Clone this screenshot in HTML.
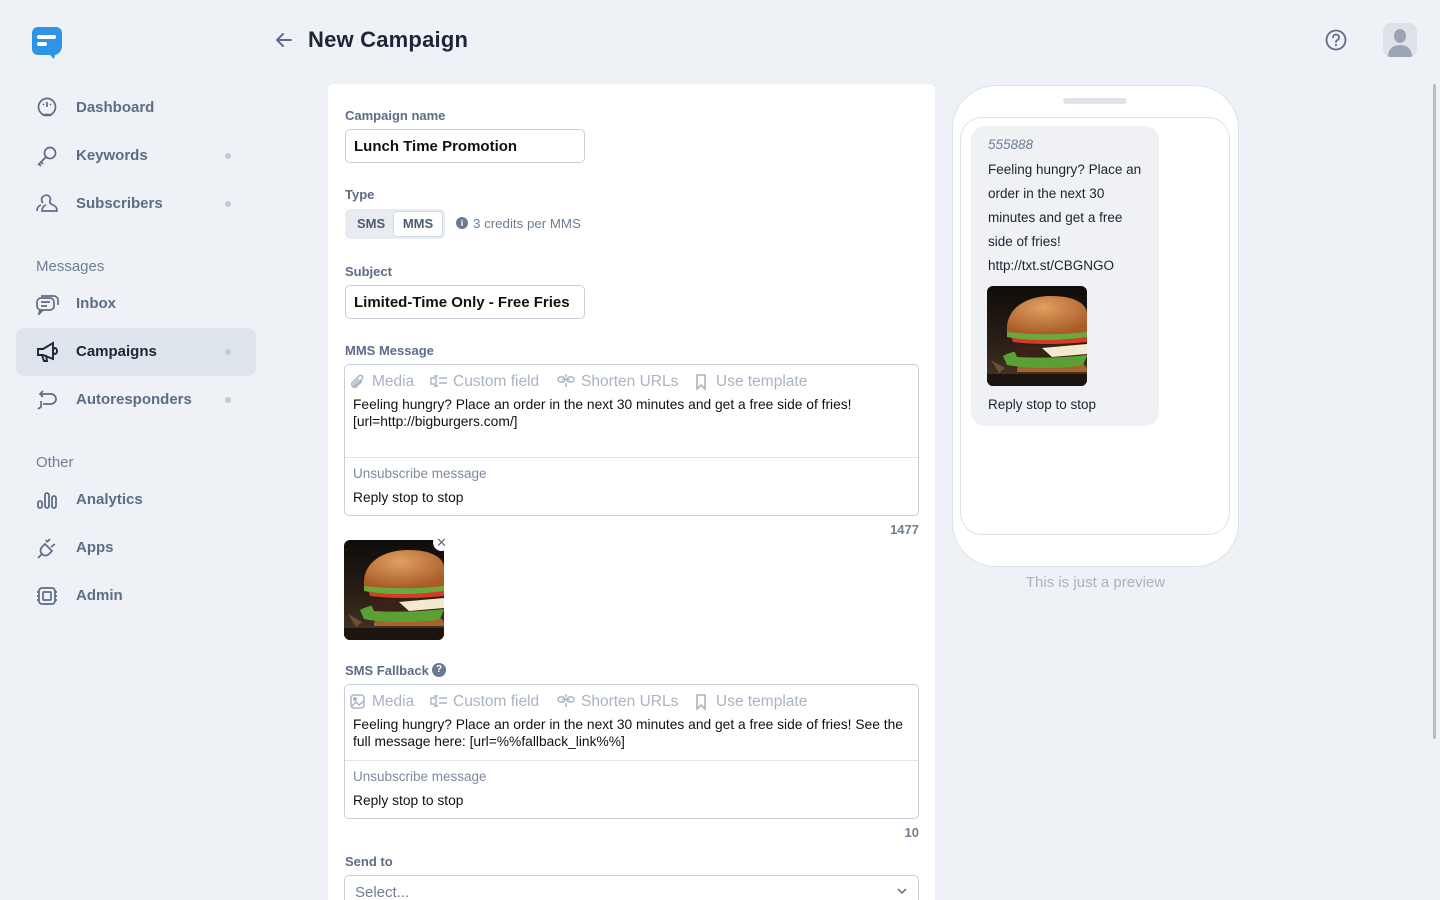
<!DOCTYPE html>
<html style="width:1440px;height:900px;overflow:hidden"><head><meta charset="utf-8">
<style>
*{box-sizing:border-box;margin:0;padding:0}
body{width:1440px;height:900px;overflow:hidden;background:#eef2f6;font-family:"Liberation Sans",sans-serif;color:#1b2333;position:relative}
.abs{position:absolute}
.nav{position:absolute;left:16px;width:240px;height:48px;display:flex;align-items:center;font-size:15px;color:#5d6c87;font-weight:bold}
.nav svg{position:absolute;left:20px;top:13px}
.nav span{position:absolute;left:60px;top:15px}
.nav .dot{position:absolute;left:209px;top:21px;width:6px;height:6px;border-radius:50%;background:#c3cbd7}
.sec{position:absolute;left:36px;font-size:15px;color:#6f7d95}
.lbl{position:absolute;left:345px;font-size:13px;color:#5d6c87;font-weight:bold}
.inp{position:absolute;left:345px;width:240px;height:34px;border:1px solid #c6ceda;border-radius:5px;font-size:15px;font-weight:bold;padding:8px 8px;color:#111}
.box{position:absolute;left:344px;width:575px;border:1px solid #c6ceda;border-radius:5px;background:#fff}
.tb{position:absolute;top:8px;font-size:15.5px;color:#a8b3c4;white-space:nowrap}
.tbi{position:absolute;top:9px}
.txt{position:absolute;left:8px;font-size:13.8px;line-height:17px;color:#111;white-space:nowrap}
.unl{position:absolute;left:8px;font-size:13.5px;color:#7d8aa0}
</style></head><body>

<svg class="abs" style="left:31px;top:26px" width="32" height="33" viewBox="0 0 32 33">
<path d="M7 1h18a6 6 0 0 1 6 6v12c0 6-3 9-7 10l-1 4-4-4H7a6 6 0 0 1-6-6V7a6 6 0 0 1 6-6z" fill="#2f93e6"/>
<rect x="6" y="9" width="19" height="4" rx="2" fill="#fff"/><rect x="6" y="16" width="10" height="4" rx="2" fill="#fff"/>
</svg>

<svg class="abs" style="left:274px;top:30px" width="20" height="20" viewBox="0 0 20 20"><path d="M17 10H3M9 4l-6 6 6 6" stroke="#5d6c87" stroke-width="2" fill="none" stroke-linecap="round" stroke-linejoin="round"/></svg>
<div class="abs" style="left:308px;top:27px;font-size:22px;font-weight:bold;color:#1b2738;letter-spacing:0.2px">New Campaign</div>
<svg class="abs" style="left:1325px;top:29px" width="22" height="22" viewBox="0 0 22 22"><circle cx="11" cy="11" r="9.5" stroke="#5d6c87" stroke-width="1.8" fill="none"/><path d="M8 8.5a3 3 0 1 1 4 2.8c-.8.4-1 .9-1 1.7" stroke="#5d6c87" stroke-width="1.8" fill="none" stroke-linecap="round"/><circle cx="11" cy="16" r="1.1" fill="#5d6c87"/></svg>
<div class="abs" style="left:1383px;top:23px;width:34px;height:34px;border-radius:8px;background:#dde2e9;overflow:hidden">
<svg width="34" height="34" viewBox="0 0 34 34"><ellipse cx="17" cy="13" rx="6" ry="7" fill="#9aa5b6"/><path d="M5 34c0-8 5-12 12-12s12 4 12 12z" fill="#9aa5b6"/></svg></div>

<div class="nav" style="top:84px"><svg width="22" height="22" viewBox="0 0 22 22" fill="none" stroke="#5d6c87" stroke-width="1.7"><circle cx="11" cy="10" r="8.5"/><path d="M11 5v5M7 7l1 1M15 7l-1 1"/><path d="M7 19c1-2 7-2 8 0" fill="#5d6c87"/></svg><span>Dashboard</span></div>
<div class="nav" style="top:132px"><svg width="22" height="22" viewBox="0 0 22 22" fill="none" stroke="#5d6c87" stroke-width="1.7"><circle cx="14" cy="8" r="5.5"/><path d="M10 12l-8 8M5 17l2 2M3 19l2 2"/></svg><span>Keywords</span><i class="dot"></i></div>
<div class="nav" style="top:180px"><svg width="24" height="22" viewBox="0 0 24 22" fill="none" stroke="#5d6c87" stroke-width="1.7"><path d="M8 3a4 4 0 0 1 6 5c-1 2 1 3 3 4 3 1 4 3 4 6H6c0-3 1-5 4-6M8 3c-3 1-3 5-1 7M5 12c-3 1-4 3-4 6"/></svg><span>Subscribers</span><i class="dot"></i></div>
<div class="sec" style="top:258px">Messages</div>
<div class="nav" style="top:280px"><svg width="24" height="22" viewBox="0 0 24 22" fill="none" stroke="#5d6c87" stroke-width="1.7"><rect x="1" y="5" width="17" height="12" rx="4"/><path d="M5 9h9M5 13h6M5 3h13a4 4 0 0 1 4 4v5M4 17l-1 4 4-4"/></svg><span>Inbox</span></div>
<div class="nav" style="top:328px;background:#dfe5ed;border-radius:8px;color:#1b2738"><svg width="24" height="22" viewBox="0 0 24 22" fill="none" stroke="#1b2738" stroke-width="1.9"><path d="M2 8h5l10-6v16L7 14H2zM6 14l2 6h3l-1-6"/><ellipse cx="19" cy="10" rx="2" ry="3"/></svg><span>Campaigns</span><i class="dot"></i></div>
<div class="nav" style="top:376px"><svg width="22" height="22" viewBox="0 0 22 22" fill="none" stroke="#5d6c87" stroke-width="1.7"><path d="M7 2L4 5l3 3M4 5h11a5 5 0 0 1 0 10H7M5 12v6l-3 2"/></svg><span>Autoresponders</span><i class="dot"></i></div>
<div class="sec" style="top:454px">Other</div>
<div class="nav" style="top:476px"><svg width="22" height="22" viewBox="0 0 22 22" fill="none" stroke="#5d6c87" stroke-width="1.8"><rect x="2" y="12" width="4" height="7" rx="2"/><rect x="9" y="4" width="4" height="15" rx="2"/><rect x="16" y="7" width="4" height="12" rx="2"/></svg><span>Analytics</span></div>
<div class="nav" style="top:524px"><svg width="22" height="22" viewBox="0 0 22 22" fill="none" stroke="#5d6c87" stroke-width="1.7"><path d="M2 21l4-4M6 17c-2-2-2-5 0-7l3-3 7 7-3 3c-2 2-5 2-7 0zM11 5l3-3M15 10l4-3M10 3l1 2"/></svg><span>Apps</span></div>
<div class="nav" style="top:572px"><svg width="22" height="22" viewBox="0 0 22 22" fill="none" stroke="#5d6c87" stroke-width="1.7"><rect x="3" y="3" width="16" height="16" rx="3"/><rect x="7" y="7" width="8" height="8" rx="1"/><path d="M1 7h2M1 11h2M1 15h2M19 7h2M19 11h2M19 15h2"/></svg><span>Admin</span></div>

<div class="abs" style="left:328px;top:84px;width:607px;height:816px;background:#fff;border-radius:6px 6px 0 0"></div>

<div class="lbl" style="top:108px">Campaign name</div>
<div class="inp" style="top:129px">Lunch Time Promotion</div>

<div class="lbl" style="top:187px">Type</div>
<div class="abs" style="left:345px;top:209px;width:100px;height:30px;background:#e8ecf1;border-radius:5px"></div>
<div class="abs" style="left:357px;top:216px;font-size:13px;font-weight:bold;color:#4d5b72">SMS</div>
<div class="abs" style="left:393px;top:211px;width:50px;height:26px;background:#fff;border:1px solid #d4dae3;border-radius:4px;font-size:13px;font-weight:bold;color:#4d5b72;text-align:center;line-height:24px">MMS</div>
<div class="abs" style="left:456px;top:217px;width:12px;height:12px;border-radius:50%;background:#6c7a91;color:#fff;font-size:9px;text-align:center;line-height:12px;font-weight:bold">i</div>
<div class="abs" style="left:473px;top:216px;font-size:13.3px;color:#6f7d95">3 credits per MMS</div>

<div class="lbl" style="top:264px">Subject</div>
<div class="inp" style="top:285px">Limited-Time Only - Free Fries</div>

<div class="lbl" style="top:343px">MMS Message</div>
<div class="box" style="top:364px;height:152px">
 <svg class="tbi" style="left:4px" width="16" height="16" viewBox="0 0 16 16" fill="none" stroke="#a8b3c4" stroke-width="1.5"><path d="M13 7l-6 6a3 3 0 0 1-4-4l7-7a2 2 0 0 1 3 3l-6 6a1 1 0 0 1-2-1l5-5"/></svg>
 <div class="tb" style="left:27px">Media</div>
 <svg class="tbi" style="left:85px;top:10px" width="18" height="12" viewBox="0 0 18 12" fill="none" stroke="#a8b3c4" stroke-width="1.4"><path d="M6 1v10M4 1h4M4 11h4M5 3H1v6h4M9 3h8M9 8h8"/></svg>
 <div class="tb" style="left:108px">Custom field</div>
 <svg class="tbi" style="left:212px;top:9px" width="18" height="14" viewBox="0 0 18 14" fill="none" stroke="#a8b3c4" stroke-width="1.4"><rect x="1" y="3" width="7" height="5" rx="2.5"/><rect x="10" y="3" width="7" height="5" rx="2.5"/><path d="M5 5.5h8M9 0v3M9 9v4"/></svg>
 <div class="tb" style="left:236px">Shorten URLs</div>
 <svg class="tbi" style="left:350px" width="12" height="16" viewBox="0 0 12 16" fill="none" stroke="#a8b3c4" stroke-width="1.6"><path d="M2 1h8v14l-4-4-4 4z"/></svg>
 <div class="tb" style="left:371px">Use template</div>
 <div class="txt" style="top:31px">Feeling hungry? Place an order in the next 30 minutes and get a free side of fries!<br>[url=http://bigburgers.com/]</div>
 <div class="abs" style="left:0;right:0;top:92px;border-top:1px solid #dfe4ea"></div>
 <div class="unl" style="top:101px">Unsubscribe message</div>
 <div class="txt" style="top:124px">Reply stop to stop</div>
</div>
<div class="abs" style="left:880px;top:522px;width:39px;text-align:right;font-size:13px;color:#6f7d95;font-weight:bold">1477</div>

<svg class="abs" style="left:344px;top:540px;border-radius:6px" width="100" height="100" viewBox="0 0 100 100">
<defs><linearGradient id="bg" x1="0" y1="0" x2="0" y2="1"><stop offset="0" stop-color="#0f0c0a"/><stop offset=".55" stop-color="#2a1e15"/><stop offset="1" stop-color="#4a3626"/></linearGradient>
<radialGradient id="bun" cx=".45" cy=".3" r=".7"><stop offset="0" stop-color="#e0a060"/><stop offset="1" stop-color="#a85c28"/></radialGradient></defs>
<rect width="100" height="100" fill="url(#bg)"/><rect y="88" width="100" height="12" fill="#1c140e"/>
<path d="M30 84c0-7 10-10 35-10s35 3 35 10v2H30z" fill="#a8622e"/>
<path d="M16 70c10-6 35-9 55-7s28 3 29 7l-4 9c-20 4-55 4-76 0z" fill="#5aa035"/>
<path d="M26 62q40-6 74-4v11q-35 4-70 2z" fill="#3a2218"/>
<path d="M55 62l45-4v10l-35 3z" fill="#f1ead0"/>
<path d="M24 50q35-4 76-2v8q-40 4-74 0z" fill="#d63a28"/>
<path d="M20 46c15-5 50-5 80-3v8c-30 4-60 4-80 0z" fill="#6aaa3c"/>
<path d="M20 46C18 22 40 10 64 10s36 8 36 18v18c-25 3-55 3-80 0z" fill="url(#bun)"/>
<path d="M4 74l14 8-6 5z" fill="#8a6a45" opacity=".6"/>
</svg>
<div class="abs" style="left:433px;top:534px;width:17px;height:17px;border-radius:50%;background:#fff;color:#5d6c87;font-size:13px;text-align:center;line-height:17px">✕</div>

<div class="lbl" style="top:663px">SMS Fallback</div>
<div class="abs" style="left:432px;top:663px;width:14px;height:14px;border-radius:50%;background:#6c7a91;color:#fff;font-size:10px;text-align:center;line-height:14px;font-weight:bold">?</div>
<div class="box" style="top:684px;height:135px">
 <svg class="tbi" style="left:5px;top:9px" width="15" height="15" viewBox="0 0 15 15" fill="none" stroke="#a8b3c4" stroke-width="1.5"><rect x="1" y="1" width="13" height="13" rx="3"/><circle cx="5" cy="5" r="1.3" fill="#a8b3c4"/><path d="M2 12l4-4 3 3 5-4"/></svg>
 <div class="tb" style="left:27px">Media</div>
 <svg class="tbi" style="left:85px;top:10px" width="18" height="12" viewBox="0 0 18 12" fill="none" stroke="#a8b3c4" stroke-width="1.4"><path d="M6 1v10M4 1h4M4 11h4M5 3H1v6h4M9 3h8M9 8h8"/></svg>
 <div class="tb" style="left:108px">Custom field</div>
 <svg class="tbi" style="left:212px;top:9px" width="18" height="14" viewBox="0 0 18 14" fill="none" stroke="#a8b3c4" stroke-width="1.4"><rect x="1" y="3" width="7" height="5" rx="2.5"/><rect x="10" y="3" width="7" height="5" rx="2.5"/><path d="M5 5.5h8M9 0v3M9 9v4"/></svg>
 <div class="tb" style="left:236px">Shorten URLs</div>
 <svg class="tbi" style="left:350px" width="12" height="16" viewBox="0 0 12 16" fill="none" stroke="#a8b3c4" stroke-width="1.6"><path d="M2 1h8v14l-4-4-4 4z"/></svg>
 <div class="tb" style="left:371px">Use template</div>
 <div class="txt" style="top:31px">Feeling hungry? Place an order in the next 30 minutes and get a free side of fries! See the<br>full message here: [url=%%fallback_link%%]</div>
 <div class="abs" style="left:0;right:0;top:75px;border-top:1px solid #dfe4ea"></div>
 <div class="unl" style="top:84px">Unsubscribe message</div>
 <div class="txt" style="top:107px">Reply stop to stop</div>
</div>
<div class="abs" style="left:880px;top:825px;width:39px;text-align:right;font-size:13px;color:#6f7d95;font-weight:bold">10</div>

<div class="lbl" style="top:854px">Send to</div>
<div class="abs" style="left:344px;top:875px;width:575px;height:25px;border:1px solid #c6ceda;border-bottom:none;border-radius:5px 5px 0 0;font-size:15px;color:#6f7d95;padding:8px 10px;overflow:hidden;line-height:18px">Select...</div>
<svg class="abs" style="left:896px;top:887px" width="12" height="8" viewBox="0 0 12 8"><path d="M2 2l4 4 4-4" stroke="#5d6c87" stroke-width="1.5" fill="none"/></svg>

<div class="abs" style="left:952px;top:85px;width:287px;height:482px;background:#fff;border:1px solid #dde2e9;border-radius:44px"></div>
<div class="abs" style="left:1063px;top:98px;width:64px;height:6px;border-radius:3px;background:#dfe3e9"></div>
<div class="abs" style="left:960px;top:117px;width:270px;height:418px;border:1px solid #dde2e9;border-radius:22px"></div>
<div class="abs" style="left:971px;top:126px;width:188px;height:300px;background:#eff1f4;border-radius:14px"></div>
<div class="abs" style="left:988px;top:137px;font-size:13.5px;font-style:italic;color:#6f7d95">555888</div>
<div class="abs" style="left:988px;top:158px;font-size:13.5px;line-height:24px;color:#1b2333;white-space:nowrap">Feeling hungry? Place an<br>order in the next 30<br>minutes and get a free<br>side of fries!<br>http://txt.st/CBGNGO</div>
<svg class="abs" style="left:987px;top:286px;border-radius:6px" width="100" height="100" viewBox="0 0 100 100">
<rect width="100" height="100" fill="url(#bg)"/><rect y="88" width="100" height="12" fill="#1c140e"/>
<path d="M30 84c0-7 10-10 35-10s35 3 35 10v2H30z" fill="#a8622e"/>
<path d="M16 70c10-6 35-9 55-7s28 3 29 7l-4 9c-20 4-55 4-76 0z" fill="#5aa035"/>
<path d="M26 62q40-6 74-4v11q-35 4-70 2z" fill="#3a2218"/>
<path d="M55 62l45-4v10l-35 3z" fill="#f1ead0"/>
<path d="M24 50q35-4 76-2v8q-40 4-74 0z" fill="#d63a28"/>
<path d="M20 46c15-5 50-5 80-3v8c-30 4-60 4-80 0z" fill="#6aaa3c"/>
<path d="M20 46C18 22 40 10 64 10s36 8 36 18v18c-25 3-55 3-80 0z" fill="url(#bun)"/>
<path d="M4 74l14 8-6 5z" fill="#8a6a45" opacity=".6"/>
</svg>
<div class="abs" style="left:988px;top:397px;font-size:13.5px;color:#1b2333">Reply stop to stop</div>
<div class="abs" style="left:952px;top:574px;width:287px;text-align:center;font-size:15px;color:#a8b3c4">This is just a preview</div>

<div class="abs" style="left:1433px;top:84px;width:3px;height:655px;background:#b9bec6;border-radius:2px"></div>
</body></html>
